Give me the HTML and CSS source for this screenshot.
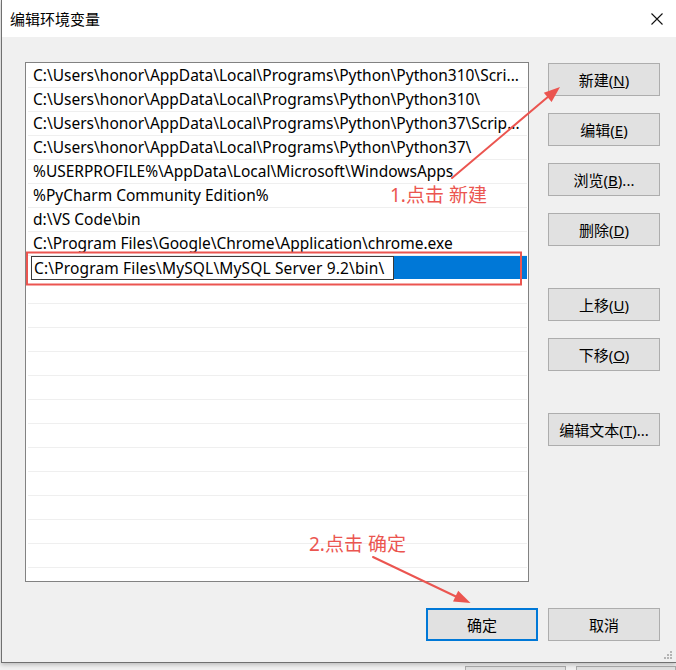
FILE: index.html
```html
<!DOCTYPE html>
<html lang="zh-CN">
<head>
  <meta charset="UTF-8" />
  <title>编辑环境变量</title>
  <link rel="stylesheet" href="styles.css">
</head>
<body>
  <div class="window">
    <div class="titlebar">
      <span class="title">编辑环境变量</span>
      <svg class="close" width="12" height="12" viewBox="0 0 12 12">
        <path d="M0.5 0.5 L11.5 11.5 M11.5 0.5 L0.5 11.5" stroke="#111" stroke-width="1.1" fill="none"/>
      </svg>
    </div>

    <div class="content">
      <div class="list">
        <div class="row">C:\Users\honor\AppData\Local\Programs\Python\Python310\Scri...</div>
        <div class="row">C:\Users\honor\AppData\Local\Programs\Python\Python310\</div>
        <div class="row">C:\Users\honor\AppData\Local\Programs\Python\Python37\Scrip...</div>
        <div class="row">C:\Users\honor\AppData\Local\Programs\Python\Python37\</div>
        <div class="row">%USERPROFILE%\AppData\Local\Microsoft\WindowsApps</div>
        <div class="row">%PyCharm Community Edition%</div>
        <div class="row">d:\VS Code\bin</div>
        <div class="row">C:\Program Files\Google\Chrome\Application\chrome.exe</div>
        <div class="row editing">
          <span class="edit">C:\Program Files\MySQL\MySQL Server 9.2\bin\</span>
          <span class="fill"></span>
        </div>
        <div class="row"></div>
        <div class="row"></div>
        <div class="row"></div>
        <div class="row"></div>
        <div class="row"></div>
        <div class="row"></div>
        <div class="row"></div>
        <div class="row"></div>
        <div class="row"></div>
        <div class="row"></div>
        <div class="row"></div>
        <div class="row"></div>
        <div class="row"></div>
      </div>

      <div class="side">
        <button class="btn">新建(<u>N</u>)</button>
        <button class="btn">编辑(<u>E</u>)</button>
        <button class="btn">浏览(<u>B</u>)...</button>
        <button class="btn">删除(<u>D</u>)</button>
        <button class="btn spaced">上移(<u>U</u>)</button>
        <button class="btn">下移(<u>O</u>)</button>
        <button class="btn spaced">编辑文本(<u>T</u>)...</button>
      </div>
    </div>

    <div class="footer">
      <button class="btn default">确定</button>
      <button class="btn">取消</button>
    </div>

    <svg class="grip" width="9" height="9" viewBox="0 0 9 9">
      <rect x="6" y="0" width="2" height="2" fill="#b4b4b4"/>
      <rect x="3" y="3" width="2" height="2" fill="#b4b4b4"/>
      <rect x="6" y="3" width="2" height="2" fill="#b4b4b4"/>
      <rect x="0" y="6" width="2" height="2" fill="#b4b4b4"/>
      <rect x="3" y="6" width="2" height="2" fill="#b4b4b4"/>
      <rect x="6" y="6" width="2" height="2" fill="#b4b4b4"/>
    </svg>
  </div>

  <div class="behind">
    <span class="ghost-btn"></span>
    <span class="ghost-btn"></span>
  </div>

  <!-- annotations drawn over the screenshot -->
  <svg class="notes" width="676" height="670" viewBox="0 0 676 670">
    <rect x="27" y="252.5" width="494" height="32" fill="none" stroke="#eb5550" stroke-width="2"/>
    <line x1="452" y1="178" x2="549" y2="96" stroke="#eb5550" stroke-width="2" stroke-linecap="round"/>
    <polygon points="560,87 551.6,101.9 543.8,92.7" fill="#eb5550"/>
    <line x1="373" y1="557" x2="459" y2="598" stroke="#eb5550" stroke-width="2" stroke-linecap="round"/>
    <polygon points="470.5,603 453,601.6 458.2,590.8" fill="#eb5550"/>
  </svg>
  <div class="note note-new">1.点击 新建</div>
  <div class="note note-ok">2.点击 确定</div>
</body>
</html>
```

FILE: styles.css
```css
body {
  margin: 0;
  width: 676px;
  height: 670px;
  overflow: hidden;
  position: relative;
  background-color: #f0f0f0;
  font-family: "Noto Sans", "Noto Sans CJK SC", sans-serif;
  font-size: 15px;
  color: #000;
}

.window {
  position: relative;
  box-sizing: border-box;
  height: 663px;
  margin-left: 1px;
  border-left: 1px solid #707070;
  border-bottom: 1px solid #707070;
  background-color: #f0f0f0;
  box-shadow: 0 2px 4px rgba(0, 0, 0, 0.2);
  display: flex;
  flex-direction: column;
}

.titlebar {
  height: 37px;
  flex: none;
  background-color: #ffffff;
  display: flex;
  align-items: center;
  justify-content: space-between;
  padding: 0 13px 0 8px;
}

.title {
  font-family: "Noto Sans CJK SC", sans-serif;
  font-size: 15px;
}

.content {
  display: flex;
  gap: 19px;
  padding: 25px 0 0 23px;
}

.list {
  box-sizing: border-box;
  width: 504px;
  height: 520px;
  border: 1px solid #828282;
  background-color: #ffffff;
  padding: 1px 1px 0 2px;
  overflow: hidden;
  font-size: 15.5px;
}

.row {
  box-sizing: border-box;
  height: 24px;
  line-height: 23px;
  padding-left: 5px;
  border-bottom: 1px solid #efefef;
  white-space: nowrap;
  overflow: hidden;
}

.row.editing {
  display: flex;
  padding-left: 3px;
  border-bottom: none;
}

.edit {
  box-sizing: border-box;
  width: 363px;
  height: 24px;
  line-height: 22px;
  padding-left: 2px;
  border: 1px solid #3a3a3a;
  background-color: #ffffff;
  letter-spacing: 0.15px;
}

.fill {
  flex: 1;
  height: 23px;
  background-color: #0078d7;
}

.side {
  display: flex;
  flex-direction: column;
  gap: 17px;
  padding-top: 1px;
}

.btn {
  box-sizing: border-box;
  width: 112px;
  height: 33px;
  padding: 0;
  background-color: #e1e1e1;
  border: 1px solid #adadad;
  font: inherit;
  color: #000;
  display: flex;
  align-items: center;
  justify-content: center;
}

.btn.spaced {
  margin-top: 25px;
}

.btn.default {
  border: 2px solid #0078d7;
}

.footer {
  display: flex;
  justify-content: flex-end;
  gap: 10px;
  padding: 26px 16px 0 0;
}

.grip {
  position: absolute;
  right: 3px;
  bottom: 2px;
}

.behind {
  display: flex;
  gap: 10px;
  padding: 3px 0 0 465px;
}

.ghost-btn {
  box-sizing: border-box;
  width: 111px;
  height: 20px;
  border: 1px solid #adadad;
  background-color: #e1e1e1;
}

.notes {
  position: absolute;
  top: 0;
  left: 0;
  pointer-events: none;
}

.note {
  position: absolute;
  font-family: "Noto Sans", "Noto Sans CJK SC", sans-serif;
  font-size: 19px;
  line-height: 20px;
  color: #eb5550;
  white-space: nowrap;
}

.note-new {
  left: 390px;
  top: 185px;
}

.note-ok {
  left: 309px;
  top: 534px;
}
```
